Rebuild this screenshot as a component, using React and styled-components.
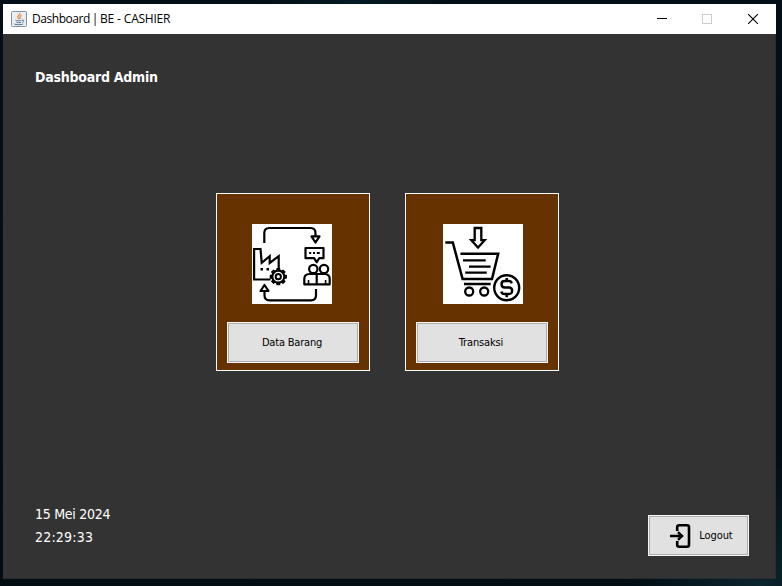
import React from 'react';
import styled, { createGlobalStyle } from 'styled-components';

const GlobalStyle = createGlobalStyle`
  * { box-sizing: border-box; }
  body { margin: 0; overflow: hidden; }
  button { font: inherit; }
`;

const Desktop = styled.div`
  width: 782px;
  height: 586px;
  padding: 4px 6px 7px 3px;
  background:
    radial-gradient(circle at 45% 0, #041a24 0, transparent 14%),
    radial-gradient(circle at 97% 100%, #0b242d 0, transparent 14%),
    linear-gradient(#020f18, #010c13);
  font-family: 'DejaVu Sans Condensed', 'DejaVu Sans', sans-serif;
  font-stretch: condensed;
`;

const Window = styled.main`
  height: 575px;
  display: flex;
  flex-direction: column;
  background: #333333;
`;

const TitleBar = styled.header`
  height: 30px;
  flex: none;
  display: flex;
  align-items: center;
  padding-left: 8px;
  background: #ffffff;
`;

const Title = styled.span`
  flex: 1;
  margin-left: 5px;
  font: 12px/16px 'Open Sans', 'Noto Sans', sans-serif;
  letter-spacing: -0.25px;
  word-spacing: 0.3px;
  color: #000000;
  white-space: nowrap;
`;

const TitleLead = styled.span`
  letter-spacing: -0.45px;
  word-spacing: -0.7px;
`;

const WindowControls = styled.div`
  display: flex;
`;

const WindowControl = styled.button`
  width: 45.5px;
  height: 30px;
  padding: 0;
  border: 0;
  display: flex;
  align-items: center;
  justify-content: center;
  background: transparent;
  color: ${(p) => (p.disabled ? '#cccccc' : '#000000')};

  &:nth-child(2) { padding-right: 1px; }
`;

const Content = styled.section`
  flex: 1;
  display: flex;
  flex-direction: column;
  padding: 33px 26px 22px 32px;
  border: solid #292c2d;
  border-width: 0 1px 1px 0;
`;

const Heading = styled.h1`
  margin: 0;
  height: 20px;
  font-size: 14px;
  line-height: 20px;
  font-weight: 700;
  letter-spacing: ${(p) => p.$tracking};
  color: #ffffff;
  white-space: nowrap;
`;

const Cards = styled.div`
  display: flex;
  gap: 35px;
  margin: 106px 0 0 181px;
`;

const Card = styled.article`
  width: 154px;
  height: 178px;
  display: flex;
  flex-direction: column;
  padding: 30px 10px 7px;
  border: 1px solid #ffffff;
  background: #663300;
`;

const Picture = styled.div`
  width: 80px;
  height: 80px;
  margin: 0 0 18px ${(p) => p.$indent};
  background: #ffffff;
`;

const Button = styled.button`
  width: ${(p) => p.$width};
  height: 41px;
  flex: none;
  display: flex;
  align-items: center;
  justify-content: center;
  gap: 8px;
  padding: ${(p) => p.$padding || '0 2px 0 0'};
  border: 1px solid #f7f7f7;
  box-shadow: inset 0 0 0 1px #adadad;
  background: #e1e1e1;
  color: #000000;
  font-size: 11px;
  line-height: 14px;
  letter-spacing: ${(p) => p.$tracking};
  white-space: nowrap;
`;

const Footer = styled.footer`
  flex: 1;
  display: flex;
  align-items: flex-end;
  justify-content: space-between;
`;

const Clock = styled.div`
  display: flex;
  flex-direction: column;
  margin-bottom: 7px;
`;

const ClockLine = styled.time`
  font-size: 14px;
  line-height: 23px;
  letter-spacing: ${(p) => p.$tracking};
  color: #ffffff;
  white-space: nowrap;
`;

const Icon = styled.svg`
  display: block;
  flex: none;
`;

function JavaIcon() {
  return (
    <Icon width="16" height="16" viewBox="0 0 16 16" fill="none">
      <rect x=".5" y=".5" width="15" height="15" rx="1" fill="#e9eef2" stroke="#8293a1" />
      <path d="M8.8 2c1 1.6-2.6 2.6-2 4.2.2.8 1 1.1 1 2M10.4 4.4C8 5.5 9.8 6.5 8.6 8" stroke="#ee8130" strokeWidth="1.2" />
      <path d="M4.5 9.2c1 .8 5 .8 6 0M5.3 11.2c1 .6 3.8.6 4.8 0M3.2 13c2 .9 7 .9 9 0M11 9.2c2.6-.6 2.2 1.7.2 2.2" stroke="#55758f" />
    </Icon>
  );
}

const GEAR_TEETH = [0, 45, 90, 135, 180, 225, 270, 315];

function SupplyIcon() {
  return (
    <Icon width="80" height="80" viewBox="0 0 80 80" fill="none" stroke="#000" strokeWidth="2.2" strokeLinejoin="round">
      <path d="M12.3 19V9q0-5 5-5h41.2q5 0 5 5v3.5" />
      <path d="M59.5 12.4h8l-4 6.1z" />
      <path d="M64 65v6.3q0 5-5 5H17.5q-5 0-5-5V67" />
      <path d="M8.5 67h8l-4-6z" />
      <path d="M18.5 55.5H2.1V25h6.4l1.2 13.8 8-6.6V39l9-6.8V44" strokeLinejoin="miter" />
      <path d="M8.5 45.2h2.5M14.5 45.2H17" strokeWidth="2.4" />
      <g>
        {GEAR_TEETH.map((a) => (
          <path key={a} d="M24.9 47v-2.3h2.8V47" transform={`rotate(${a} 26.3 52.7)`} fill="#000" strokeWidth="1.2" />
        ))}
        <circle cx="26.3" cy="52.7" r="6" fill="#fff" />
        <circle cx="26.3" cy="52.7" r="2.6" strokeWidth="2" />
      </g>
      <path d="M53.5 24h18v10.2h-4.2l-2.6 4-2.6-4h-8.6z" />
      <path d="M57.2 29h2M61 29h2M64.8 29h3" strokeWidth="1.8" />
      <circle cx="61.3" cy="45" r="4.2" />
      <circle cx="72" cy="45" r="4.2" />
      <path d="M57.5 50h7.2v10.3H52.3V55q0-5 5.2-5zM64.7 50h7.8q5.2 0 5.2 5v5.3h-13" />
      <path d="M56.5 60v-4M73.6 60v-4" strokeWidth="1.6" />
    </Icon>
  );
}

function CartIcon() {
  return (
    <Icon width="80" height="80" viewBox="0 0 80 80" fill="none" stroke="#000" strokeWidth="2.3">
      <path d="M31.7 4h6.6v12.2h3.4L35 23.5l-6.7-7.3h3.4z" />
      <path d="M2.3 18.5h7.5L19.6 55H49l6.2-25.3H17.5" strokeWidth="2.5" />
      <path d="M20 36.3h22.7M26 42.7h21.6M22.2 48.7h21.6M21 60h26.7" />
      <circle cx="26.2" cy="67.5" r="4" />
      <circle cx="41.2" cy="67.5" r="4" />
      <circle cx="63.7" cy="63.7" r="12.5" strokeWidth="2.4" />
      <path d="M68.8 59.3q-.7-2.3-3-2.3h-4q-3.3 0-3.3 3.2t3.3 3.3h4q3.3 0 3.3 3.3t-3.4 3.2h-4q-2.8 0-3.4-2.6M63.7 54v3M63.7 70v3.2" strokeWidth="2.4" />
    </Icon>
  );
}

function LogoutIcon() {
  return (
    <Icon width="22" height="26" viewBox="0 0 22 26" fill="none" stroke="#000" strokeWidth="2.6">
      <path d="M8.2 8V4.3q0-2 2-2h7.8q2 0 2 2v17.4q0 2-2 2h-7.8q-2 0-2-2V18" />
      <path d="M1 13h11.5M9 9.2l4 3.8-4 3.8" strokeWidth="2.5" />
    </Icon>
  );
}

export default function App() {
  return (
    <>
      <GlobalStyle />
      <Desktop>
        <Window>
          <TitleBar>
            <JavaIcon />
            <Title><TitleLead>Dashboard | </TitleLead>BE - CASHIER</Title>
            <WindowControls>
              <WindowControl aria-label="Minimize">
                <Icon width="10" height="10" viewBox="0 0 10 10" stroke="currentColor"><path d="M0 4.5h10" shapeRendering="crispEdges" /></Icon>
              </WindowControl>
              <WindowControl aria-label="Maximize" disabled>
                <Icon width="10" height="10" viewBox="0 0 10 10" fill="none" stroke="currentColor"><path d="M.5.5h9v9h-9z" shapeRendering="crispEdges" /></Icon>
              </WindowControl>
              <WindowControl aria-label="Close">
                <Icon width="10" height="10" viewBox="0 0 10 10" stroke="currentColor" strokeWidth="1.1"><path d="M0 0l10 10M10 0L0 10" /></Icon>
              </WindowControl>
            </WindowControls>
          </TitleBar>
          <Content>
            <Heading $tracking="-0.24px">Dashboard Admin</Heading>
            <Cards>
              <Card>
                <Picture $indent="25px"><SupplyIcon /></Picture>
                <Button $width="132px" $tracking="-0.2px">Data Barang</Button>
              </Card>
              <Card>
                <Picture $indent="27px"><CartIcon /></Picture>
                <Button $width="132px" $tracking="-0.15px">Transaksi</Button>
              </Card>
            </Cards>
            <Footer>
              <Clock>
                <ClockLine $tracking="-0.28px">15 Mei 2024</ClockLine>
                <ClockLine $tracking="0.2px">22:29:33</ClockLine>
              </Clock>
              <Button $width="101px" $padding="1px 0 0 5px" $tracking="-0.1px"><LogoutIcon />Logout</Button>
            </Footer>
          </Content>
        </Window>
      </Desktop>
    </>
  );
}
